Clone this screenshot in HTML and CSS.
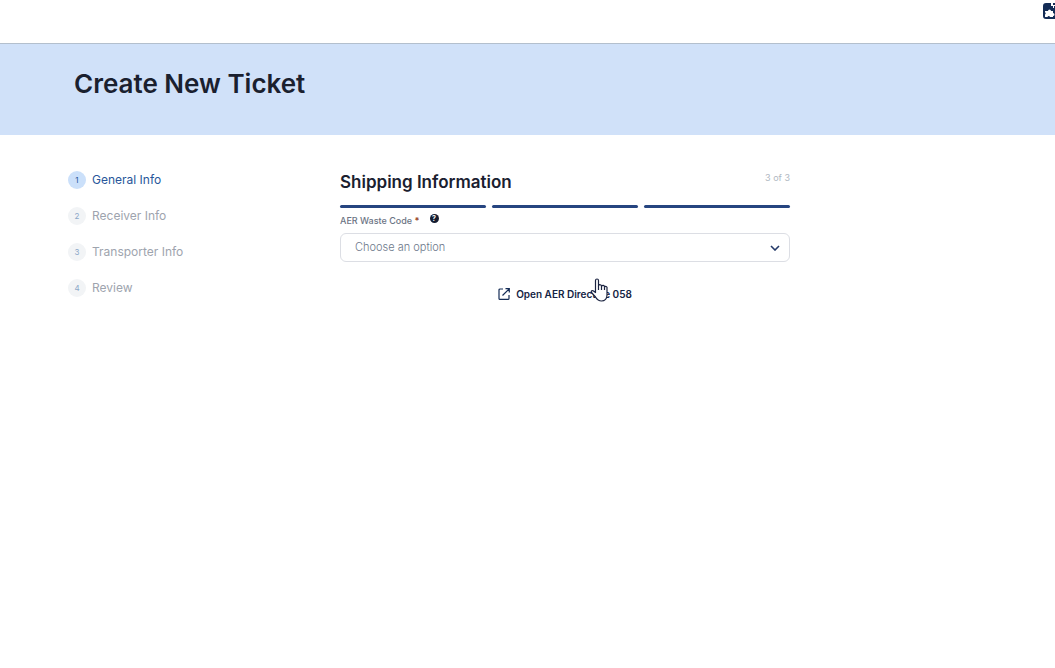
FILE: index.html
```html
<!DOCTYPE html>
<html lang="en">
<head>
    <meta charset="UTF-8">
    <meta name="viewport" content="width=device-width, initial-scale=1.0">
    <title>Create New Ticket</title>
    <link rel="stylesheet" href="styles.css">
</head>
<body>

    <header class="topbar">
        <button class="ext-btn" type="button" aria-label="Extensions">
            <svg width="16" height="16" viewBox="0 0 16 16">
                <path d="M3 0h5v5h8v11H3a3 3 0 0 1-3-3V3a3 3 0 0 1 3-3z" fill="#142c56"/>
                <path d="M2 8h3a1.500 1.500 0 0 1 3 0h2v2a1.500 1.500 0 0 1 0 3v1H7a1.300 1.300 0 0 0-2.500 0H2v-2.500a1.300 1.300 0 0 0 0-2.300z" fill="#fff"/>
                <path d="M10 0h2v2h-2zM8 3h2v2H8zM11 3h1v2h-1z" fill="#142c56"/>
            </svg>
        </button>
    </header>

    <div class="banner">
        <h1>Create New Ticket</h1>
    </div>

    <div class="content">
        <nav class="steps">
            <a href="#general" class="step active"><span class="num">1</span>General Info</a>
            <a href="#receiver" class="step"><span class="num">2</span>Receiver Info</a>
            <a href="#transporter" class="step"><span class="num">3</span>Transporter Info</a>
            <a href="#review" class="step"><span class="num">4</span>Review</a>
        </nav>

        <main class="form">
            <div class="form-head">
                <h2>Shipping Information</h2>
                <span class="count">3 of 3</span>
            </div>

            <div class="progress">
                <span></span>
                <span></span>
                <span></span>
            </div>

            <div class="label-row">
                <label for="wasteCode">AER Waste Code <b>*</b></label>
                <button class="help" type="button" aria-label="Help">?</button>
            </div>

            <div class="select-wrap">
                <select id="wasteCode">
                    <option>Choose an option</option>
                </select>
                <svg class="chevron" width="10" height="6" viewBox="0 0 10 6" fill="none" stroke="#253a69" stroke-width="1.600">
                    <path d="M1 1l4 4 4-4"/>
                </svg>
            </div>

            <div class="link-row">
                <a href="#directive" class="directive">
                    <svg width="12" height="12" viewBox="0 0 12 12" fill="none" stroke="#142c56" stroke-width="1.200">
                        <path d="M5 1H2a1 1 0 0 0-1 1v8.400a1 1 0 0 0 1 1h8a1 1 0 0 0 1-1V7M7.500.7h3.800v3.800M11.200.8L4.500 7.500"/>
                    </svg>
                    Open AER Directive 058
                </a>
                <svg class="pointer" width="18" height="24" viewBox="0 0 18 24">
                    <path d="M5.500 14.500V2.500a1.500 1.500 0 0 1 3 0V8a1.500 1.500 0 0 1 3 .5 1.500 1.500 0 0 1 3 .8 1.300 1.300 0 0 1 2.500.9V17c0 3.500-2.200 6-5.500 6-3 0-4.500-1.500-6-4L1.500 14.500c-.9-1.500.8-2.500 2-1.500z" fill="#fff" stroke="#1b2340" stroke-width="1.200" stroke-linejoin="round"/>
                    <path d="M8.500 8v4M11.500 8.500V12M14.500 9.500V12" stroke="#1b2340" stroke-width="1.200"/>
                </svg>
            </div>
        </main>
    </div>

</body>
</html>
```
FILE: styles.css
```css
* {
    box-sizing: border-box;
}

body {
    margin: 0;
    background: #fff;
    color: #1a202f;
    font-family: Inter, "Liberation Sans", sans-serif;
    overflow-x: hidden;
}

/* Top bar */
.topbar {
    display: flex;
    justify-content: flex-end;
    align-items: flex-start;
    height: 44px;
    padding-top: 3px;
    border-bottom: 1px solid #b3bfcd;
    overflow: hidden;
}

.ext-btn {
    margin-right: -4px;
    padding: 0;
    border: none;
    background: none;
    cursor: pointer;
}

.ext-btn svg {
    display: block;
}

/* Page title */
.banner {
    padding: 22px 74px 33px;
    background: #d0e1f9;
}

h1 {
    margin: 0;
    font-size: 26px;
    line-height: 36px;
    font-weight: 600;
}

/* Steps on the left, form on the right */
.content {
    display: flex;
    padding: 36px 68px;
}

.steps {
    display: flex;
    flex-direction: column;
    gap: 18px;
    width: 272px;
    flex-shrink: 0;
}

.step {
    display: flex;
    align-items: center;
    gap: 6px;
    color: #9ea4ae;
    font-size: 12px;
    line-height: 18px;
    text-decoration: none;
}

.num {
    width: 18px;
    height: 18px;
    border-radius: 50%;
    background: #f2f4f6;
    color: #8ba7c8;
    font-size: 8px;
    text-align: center;
}

.step.active {
    color: #28569a;
}

.step.active .num {
    background: #cbe0fa;
    color: #28569a;
}

.form {
    flex: 1;
    max-width: 450px;
}

.form-head {
    display: flex;
    justify-content: space-between;
    align-items: flex-start;
}

h2 {
    margin: 0;
    font-size: 17px;
    line-height: 22px;
    font-weight: 600;
}

.count {
    color: #b0b8c2;
    font-size: 9px;
    line-height: 14px;
}

.progress {
    display: flex;
    gap: 6px;
    margin-top: 12px;
}

.progress span {
    flex: 1;
    height: 3px;
    border-radius: 2px;
    background: #264580;
}

/* Waste code field */
.label-row {
    display: flex;
    align-items: flex-start;
    gap: 10px;
    margin-top: 5px;
    color: #6c7484;
    font-size: 9px;
    line-height: 16px;
    font-weight: 500;
}

.label-row b {
    color: #9b4a2c;
}

.help {
    width: 9px;
    height: 9px;
    margin-top: 1px;
    padding: 0;
    border: none;
    border-radius: 50%;
    background: #141c30;
    color: #fff;
    font: 700 7px/9px Inter, sans-serif;
    cursor: pointer;
}

.select-wrap {
    position: relative;
    margin-top: 4px;
}

select {
    display: block;
    width: 100%;
    height: 29px;
    padding: 0 14px 1px;
    border: 1px solid #dcdee4;
    border-radius: 6px;
    background: #fff;
    color: #6c788a;
    font-family: inherit;
    font-size: 11px;
    font-weight: 300;
    appearance: none;
}

.chevron {
    position: absolute;
    top: 12px;
    right: 10px;
    pointer-events: none;
}

.link-row {
    position: relative;
    display: flex;
    justify-content: center;
    margin-top: 24px;
}

.directive {
    display: flex;
    align-items: center;
    gap: 6px;
    color: #142444;
    font-size: 10px;
    line-height: 16px;
    font-weight: 600;
    text-decoration: none;
}

/* Hand cursor over the link */
.pointer {
    position: absolute;
    top: -8px;
    left: 250px;
    pointer-events: none;
}
```
